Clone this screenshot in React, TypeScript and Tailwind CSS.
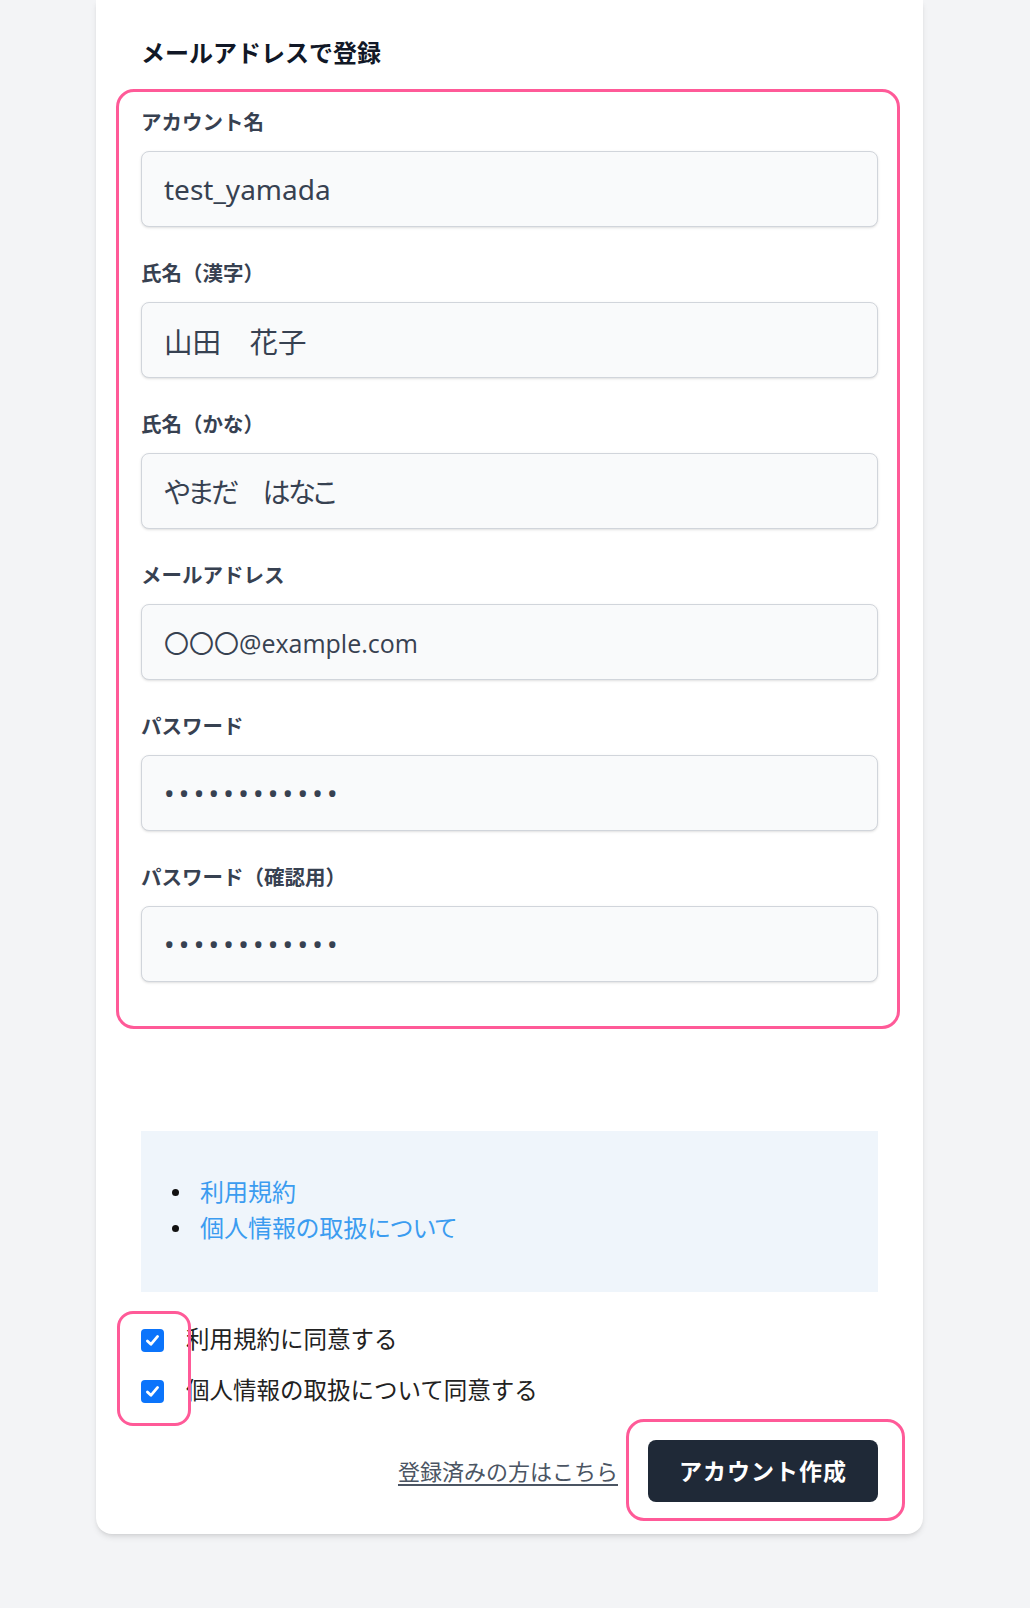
import React from "react";

const jp = { fontFamily: '"Noto Sans", "Noto Sans CJK JP", sans-serif' };

function Field({ label, children }: { label: string; children: React.ReactNode }) {
  return (
    <div className="flex flex-col">
      <label className="mb-[15px] text-[20.5px] leading-[28px] font-semibold text-[#374151]">{label}</label>
      {children}
    </div>
  );
}

const inputCls =
  "h-[76px] w-full rounded-lg border border-[#d1d5db] bg-[#f9fafb] px-[22px] text-[#374151] shadow-sm outline-none";

function Check() {
  return (
    <span className="flex h-[23px] w-[23px] items-center justify-center rounded-[4px] bg-[#0b74fb]">
      <svg width="17" height="17" viewBox="0 0 16 16" fill="none">
        <path d="M3.2 8.4 L6.5 11.6 L12.8 4.2" stroke="white" strokeWidth="2.6" strokeLinecap="round" strokeLinejoin="round" />
      </svg>
    </span>
  );
}

function Bullet({ children }: { children: React.ReactNode }) {
  return (
    <li className="flex items-center">
      <span className="h-[7px] w-[7px] shrink-0 rounded-full bg-[#111]" />
      <span className="ml-[21px]">{children}</span>
    </li>
  );
}

export default function App() {
  return (
    <div className="min-h-screen bg-[#f3f4f6] pl-[96px] pb-[75px]" style={jp}>
      <div className="relative w-[827px] rounded-b-2xl bg-white px-[45px] pt-[37px] pb-[32px] shadow-md">
        <h2 className="text-[24px] leading-[32px] font-bold text-[#111827]">メールアドレスで登録</h2>

        <div className="relative mt-[39px] flex flex-col gap-[32px]">
          <Field label="アカウント名">
            <input readOnly className={inputCls + " text-[28px]"} value="test_yamada" />
          </Field>
          <Field label="氏名（漢字）">
            <input readOnly className={inputCls + " text-[28.5px]"} value="山田　花子" />
          </Field>
          <Field label="氏名（かな）">
            <input
              readOnly
              className={inputCls + " text-[28px] tracking-[-2.5px] [font-feature-settings:'palt']"}
              value="やまだ　はなこ"
            />
          </Field>
          <Field label="メールアドレス">
            <input
              readOnly
              className={inputCls + " px-[18px] text-[25px] text-[#444]"}
              style={{ fontFamily: '"Open Sans", "Noto Sans CJK JP", sans-serif' }}
              value="〇〇〇@example.com"
            />
          </Field>
          <Field label="パスワード">
            <input readOnly type="password" className={inputCls + " text-[28px] tracking-[4.3px]"} value="password1234" />
          </Field>
          <Field label="パスワード（確認用）">
            <input readOnly type="password" className={inputCls + " text-[28px] tracking-[4.3px]"} value="password1234" />
          </Field>
          <div className="pointer-events-none absolute -top-[19px] -right-[22px] -bottom-[47px] -left-[25px] rounded-[18px] border-[3px] border-[#ff5a98]" />
        </div>

        <div className="mt-[149px] bg-[#eff5fb] pt-[43px] pb-[46px]">
          <ul className="pl-[31px] text-[24px] leading-[36px]">
            <Bullet>
              <a className="text-[#3b9cf0]" href="#">利用規約</a>
            </Bullet>
            <Bullet>
              <a className="text-[#3b9cf0] [font-feature-settings:'palt']" href="#">個人情報の取扱について</a>
            </Bullet>
          </ul>
        </div>

        <div className="relative mt-[30px] flex flex-col gap-[15px]">
          <div className="flex h-[36px] items-center gap-[22px]">
            <Check />
            <span className="text-[23.5px] text-[#222]">利用規約に同意する</span>
          </div>
          <div className="flex h-[36px] items-center gap-[22px]">
            <Check />
            <span className="text-[23.5px] text-[#222]">個人情報の取扱について同意する</span>
          </div>
          <div className="pointer-events-none absolute -top-[11px] -bottom-[17px] -left-[24px] w-[74px] rounded-[16px] border-[3px] border-[#ff5a98]" />
        </div>

        <div className="mt-[31px] flex items-center justify-end gap-[30px]">
          <a href="#" className="text-[22px] text-[#4b5563] underline underline-offset-4">登録済みの方はこちら</a>
          <div className="relative">
            <button className="flex h-[62px] w-[230px] items-center justify-center rounded-lg bg-[#1f2937] text-[23px] font-bold tracking-[1px] text-white">
              アカウント作成
            </button>
            <div className="pointer-events-none absolute -top-[21px] -right-[27px] -bottom-[19px] -left-[22px] rounded-[18px] border-[3px] border-[#ff5a98]" />
          </div>
        </div>
      </div>
    </div>
  );
}
